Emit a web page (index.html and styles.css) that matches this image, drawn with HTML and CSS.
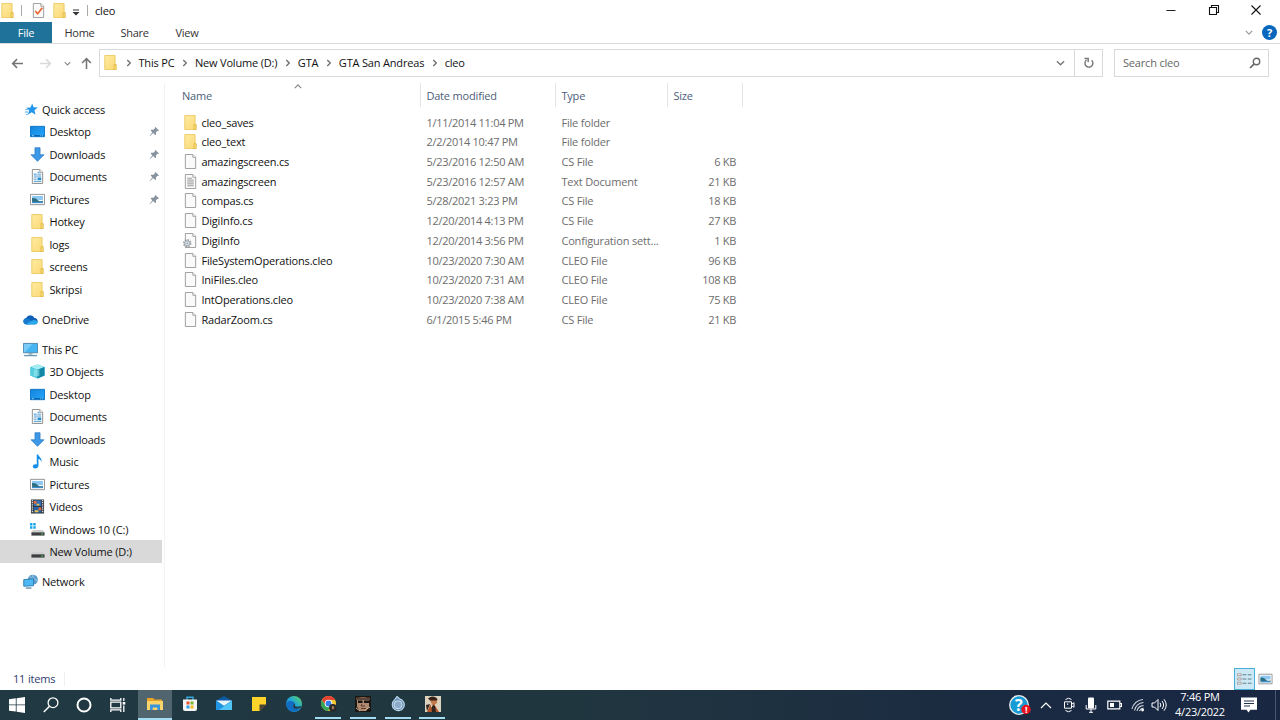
FILE: index.html
```html
<!DOCTYPE html>
<html lang="en">
<head>
    <meta charset="UTF-8">
    <meta name="viewport" content="width=device-width, initial-scale=1.0">
    <title>cleo</title>
    <link rel="stylesheet" href="styles.css">
</head>
<body>
    <svg class="sprite" width="0" height="0">
        <linearGradient id="gFolder" x1="0" y1="0" x2="1" y2="1"><stop offset="0" stop-color="#ffeba3"/><stop offset="1" stop-color="#fbd974"/></linearGradient>
        <linearGradient id="gBlue" x1="0" y1="0" x2="1" y2="1"><stop offset="0" stop-color="#1583dc"/><stop offset="1" stop-color="#25a7fb"/></linearGradient>
        <linearGradient id="gEdge" x1="0" y1="1" x2="1" y2="0"><stop offset="0" stop-color="#0b63b8"/><stop offset=".5" stop-color="#1fa5dd"/><stop offset="1" stop-color="#61d85b"/></linearGradient>
        <symbol id="folder" viewBox="0 0 16 16"><path d="M1.900.600h11v9.600h.9v5.400H1.900z" fill="url(#gFolder)" stroke="#ebc658" stroke-width=".9"/><path d="M11.700 15.500v-5.200h2.300v5.200z" fill="#fbdc7c" stroke="#dfb640" stroke-width=".8"/></symbol>
        <symbol id="file" viewBox="0 0 16 16"><path d="M2.500.5h8l3 3v12h-11z" fill="#fafafa" stroke="#9a9a9a"/><path d="M10.500.5v3h3" fill="#fff" stroke="#9a9a9a"/></symbol>
        <symbol id="text" viewBox="0 0 16 16"><use href="#file"/><path d="M4.500 4.500h5M4.500 6.500h7M4.500 8.500h7M4.500 10.500h7M4.500 12.500h7" stroke="#939393"/></symbol>
        <symbol id="config" viewBox="0 0 16 16"><use href="#file"/><circle cx="4.500" cy="11" r="3.600" fill="#e6eaec" stroke="#949da2" stroke-width="1.800" stroke-dasharray="1.600 1.200"/><circle cx="4.500" cy="11" r="2.700" fill="#e0e5e8" stroke="#9aa5ab"/><circle cx="4.500" cy="11" r=".9" fill="#8e999f"/></symbol>
        <symbol id="check" viewBox="0 0 16 16"><use href="#file"/><path d="M4.500 8.500l2.600 3 5-6.500" fill="none" stroke="#e9672f" stroke-width="1.800"/></symbol>
        <symbol id="star" viewBox="0 0 16 16"><path d="M9.800 1.500l1.500 4.200 4.500.2-3.600 2.800 1.100 5-4-2.700-4.200 2.700 1.600-4.800-3.200-2.800 4.500-.2z" fill="#2196ec"/><path d="M2.500 8.200h3M2 10.700h3.500M3 13.200h2" stroke="#4ba9ec"/></symbol>
        <symbol id="desktop" viewBox="0 0 16 16"><path d="M.5 2.500h15v11H.5z" fill="url(#gBlue)" stroke="#0873c8"/><path d="M1 12.500h14" stroke="#065da6" stroke-width="1.200"/><path d="M2 12.500h2M11 12.500h1M13 12.500h1" stroke="#a5dcff"/></symbol>
        <symbol id="download" viewBox="0 0 16 16"><path d="M5.300.8h5.400v7.500h4.200L8 15.300 1.100 8.300h4.200z" fill="#3d98e8" stroke="#2b79c5" stroke-width=".8"/></symbol>
        <symbol id="document" viewBox="0 0 16 16"><path d="M2.500.5h8l3 3v12h-11z" fill="#fff" stroke="#8b8b8b"/><path d="M10.500.5v3h3" fill="#fff" stroke="#999"/><path d="M4 5.500h3M8 3.500h2" stroke="#1c85d4"/><path d="M4 7.500h8M8 5.500h4M4 9.500h3M4 11.500h3M4 13.500h8" stroke="#4e98cc"/><path d="M8 9h4v3H8z" fill="#258fcf"/></symbol>
        <symbol id="picture" viewBox="0 0 16 16"><path d="M.5 2.500h15v11H.5z" fill="#fff" stroke="#8e8e8e"/><path d="M2.200 4.200h11.600v4.400H2.200z" fill="#8cc8f2"/><path d="M2.200 6.500q4-.5 6 2t5.600.8v1.600H2.200z" fill="#2c6f80"/><path d="M2.200 10.400h11.600v1.500H2.200z" fill="#3c8ccc"/></symbol>
        <symbol id="cloud" viewBox="0 0 16 16"><path d="M3.500 13A3.400 3.400 0 0 1 3.300 6.300 5 5 0 0 1 12.300 6.300 3.400 3.400 0 0 1 13 13z" fill="#0d5fb8"/><path d="M3.400 13.200A3.300 3.300 0 0 1 1.300 7.600q3-1.500 6 .4l6 4.400z" fill="#187bd0"/><path d="M3.400 13.200q4-3.500 7.800-4.700 5.200.2 4.300 3.200-.7 1.500-2.500 1.500z" fill="#29a8ea"/></symbol>
        <symbol id="pc" viewBox="0 0 16 16"><path d="M.5 1.500h15v10H.5z" fill="#46b5f1" stroke="#4d86a8"/><path d="M1 2h9l-8 9H1z" fill="#79ccf7"/><path d="M6 12h4v1.500H6z" fill="#8aa4b4"/><path d="M1 14.500h14" stroke="#6e97b1" stroke-width="1.400"/></symbol>
        <symbol id="cube" viewBox="0 0 16 16"><path d="M8 .5l7.500 2.800v9L8 15.500.5 12.300v-9z" fill="#20b3cf"/><path d="M8 .5l7.500 2.800L8 6 .5 3.300z" fill="#a5edf3"/><path d="M.5 3.300L8 6v9.500L.5 12.300z" fill="#55cfdf"/><path d="M8 6l7.500-2.700v9L8 15.500z" fill="#1388a6"/><path d="M4 6h6v7H4z" fill="#a2edf3" opacity=".55"/></symbol>
        <symbol id="music" viewBox="0 0 16 16"><path d="M7.200.6h1.700c.5 3 3.900 3.400 3.500 8-.8-2.200-1.800-3-3.400-3.300v7.300c0 3.300-6 4-6 .8 0-2.300 2.500-3 4.200-2.200z" fill="#168eea"/></symbol>
        <symbol id="video" viewBox="0 0 16 16"><path d="M1 .5h14v15H1z" fill="#34373b"/><path d="M2.500 1v14M13.500 1v14" stroke="#e5e5e5" stroke-width="1.300" stroke-dasharray="1.300 1"/><path d="M4 1.500h8v6H4z" fill="#3471bf"/><path d="M4 8.500h8v6H4z" fill="#2862ab"/><path d="M4 2h3v3H4zM9 9h3v3H9z" fill="#de6b38"/><path d="M7 5h3v2H7zM5 12h4v2H5z" fill="#e6c14a"/></symbol>
        <symbol id="drive" viewBox="0 0 16 16"><path d="M3 8.500h10.500l2 2.500H1.500z" fill="#cfcfcf"/><path d="M1.500 11h14v3.500h-14z" fill="#3d3f41"/><path d="M12 12.800h2" stroke="#54e260"/></symbol>
        <symbol id="windrive" viewBox="0 0 16 16"><use href="#drive"/><path d="M0 1h2.600v2.600H0zM3.500 1h2.600v2.600H3.500zM0 4.500h2.600v2.600H0zM3.500 4.500h2.600v2.600H3.500z" fill="#16a6ea"/></symbol>
        <symbol id="network" viewBox="0 0 16 16"><circle cx="10.500" cy="6" r="5.300" fill="#5c9cc9"/><path d="M7 3q4 1 3 5M11 1q-2 3 4 6" fill="none" stroke="#aad4ed"/><path d="M.8 6l10.400-1v7.500L.8 13z" fill="#4cb9f4" stroke="#2f7cb2"/><path d="M3 15h6" stroke="#688fa9" stroke-width="1.500"/></symbol>
        <symbol id="pin" viewBox="0 0 12 12"><path d="M7 1l4 4-1.200.5-.6-.2-1.700 1.800.2 2.200-1 .6-2.200-2.200L1 11.300l-.3-.5 2.900-3.900L1.800 5l.6-1 2.300.2 1.800-1.700-.2-.8z" fill="#87939e"/></symbol>
        <symbol id="chev" viewBox="0 0 6 8"><path d="M1.300 1l3 3-3 3" fill="none" stroke="#6d6d6d" stroke-width="1.300"/></symbol>
        <symbol id="down" viewBox="0 0 10 6"><path d="M1 1l4 4 4-4" fill="none" stroke="currentColor" stroke-width="1.500"/></symbol>
        <symbol id="arrow" viewBox="0 0 14 12"><path d="M13 6H2M6.500 1.200L1.700 6l4.800 4.800" fill="none" stroke="currentColor" stroke-width="1.700"/></symbol>
    </svg>

    <div class="window">
        <div class="titlebar">
            <svg class="icon"><use href="#folder"/></svg>
            <i class="rule first"></i>
            <svg class="icon task"><use href="#check"/></svg>
            <svg class="icon second"><use href="#folder"/></svg>
            <svg class="customize" viewBox="0 0 8 7"><path d="M1 1h6" stroke="#333"/><path d="M.5 3h7L4 6.500z" fill="#333"/></svg>
            <i class="rule"></i>
            <span class="title">cleo</span>
            <div class="controls">
                <svg viewBox="0 0 12 12"><path d="M1.500 6.500h9" stroke="#222"/></svg>
                <svg viewBox="0 0 12 12"><path d="M1.500 3.500h7v7h-7zM3.500 3.500v-2h7v7h-2" fill="none" stroke="#111" stroke-width="1.100"/></svg>
                <svg viewBox="0 0 12 12"><path d="M1.500 1.500l9 9M10.500 1.500l-9 9" stroke="#111" stroke-width="1.100"/></svg>
            </div>
        </div>

        <div class="tabs">
            <span class="tab file">File</span>
            <span class="tab home">Home</span>
            <span class="tab share">Share</span>
            <span class="tab view">View</span>
            <div class="tabs-right">
                <svg class="expand"><use href="#down"/></svg>
                <span class="help">?</span>
            </div>
        </div>

        <div class="navbar">
            <svg class="arrow"><use href="#arrow"/></svg>
            <svg class="arrow forward"><use href="#arrow"/></svg>
            <svg class="recent"><use href="#down"/></svg>
            <svg class="arrow up"><use href="#arrow"/></svg>
            <div class="address">
                <svg class="icon"><use href="#folder"/></svg>
                <svg class="chev"><use href="#chev"/></svg><span>This PC</span>
                <svg class="chev"><use href="#chev"/></svg><span>New Volume (D:)</span>
                <svg class="chev"><use href="#chev"/></svg><span>GTA</span>
                <svg class="chev"><use href="#chev"/></svg><span>GTA San Andreas</span>
                <svg class="chev"><use href="#chev"/></svg><span>cleo</span>
                <svg class="history"><use href="#down"/></svg>
                <div class="refresh"><svg viewBox="0 0 12 12"><path d="M8.600 3.200A4 4 0 1 1 3.500 3M1.500 1.500h3.700v3.700" fill="none" stroke="#777" stroke-width="1.400"/></svg></div>
            </div>
            <div class="search">
                <span>Search cleo</span>
                <svg viewBox="0 0 12 12"><circle cx="7.500" cy="4.500" r="3.200" fill="none" stroke="#666" stroke-width="1.400"/><path d="M5.200 6.800L1 11" stroke="#666" stroke-width="1.700"/></svg>
            </div>
        </div>

        <div class="main">
            <div class="sidebar">
                <div class="nav root"><svg class="icon"><use href="#star"/></svg>Quick access</div>
                <div class="nav"><svg class="icon"><use href="#desktop"/></svg>Desktop<svg class="pin"><use href="#pin"/></svg></div>
                <div class="nav"><svg class="icon"><use href="#download"/></svg>Downloads<svg class="pin"><use href="#pin"/></svg></div>
                <div class="nav"><svg class="icon"><use href="#document"/></svg>Documents<svg class="pin"><use href="#pin"/></svg></div>
                <div class="nav"><svg class="icon"><use href="#picture"/></svg>Pictures<svg class="pin"><use href="#pin"/></svg></div>
                <div class="nav"><svg class="icon"><use href="#folder"/></svg>Hotkey</div>
                <div class="nav"><svg class="icon"><use href="#folder"/></svg>logs</div>
                <div class="nav"><svg class="icon"><use href="#folder"/></svg>screens</div>
                <div class="nav"><svg class="icon"><use href="#folder"/></svg>Skripsi</div>
                <div class="nav root"><svg class="icon"><use href="#cloud"/></svg>OneDrive</div>
                <div class="nav root"><svg class="icon"><use href="#pc"/></svg>This PC</div>
                <div class="nav"><svg class="icon"><use href="#cube"/></svg>3D Objects</div>
                <div class="nav"><svg class="icon"><use href="#desktop"/></svg>Desktop</div>
                <div class="nav"><svg class="icon"><use href="#document"/></svg>Documents</div>
                <div class="nav"><svg class="icon"><use href="#download"/></svg>Downloads</div>
                <div class="nav"><svg class="icon"><use href="#music"/></svg>Music</div>
                <div class="nav"><svg class="icon"><use href="#picture"/></svg>Pictures</div>
                <div class="nav"><svg class="icon"><use href="#video"/></svg>Videos</div>
                <div class="nav"><svg class="icon"><use href="#windrive"/></svg>Windows 10 (C:)</div>
                <div class="nav selected"><svg class="icon"><use href="#drive"/></svg>New Volume (D:)</div>
                <div class="nav root"><svg class="icon"><use href="#network"/></svg>Network</div>
            </div>

            <div class="files">
                <div class="row head">
                    <span>Name<svg class="sort"><use href="#down"/></svg></span><span>Date modified</span><span>Type</span><span>Size</span>
                </div>
                <div class="row"><span class="name"><svg class="icon"><use href="#folder"/></svg>cleo_saves</span><span class="date">1/11/2014 11:04 PM</span><span>File folder</span><span class="size"></span></div>
                <div class="row"><span class="name"><svg class="icon"><use href="#folder"/></svg>cleo_text</span><span class="date">2/2/2014 10:47 PM</span><span>File folder</span><span class="size"></span></div>
                <div class="row"><span class="name"><svg class="icon"><use href="#file"/></svg>amazingscreen.cs</span><span class="date">5/23/2016 12:50 AM</span><span>CS File</span><span class="size">6 KB</span></div>
                <div class="row"><span class="name"><svg class="icon"><use href="#text"/></svg>amazingscreen</span><span class="date">5/23/2016 12:57 AM</span><span>Text Document</span><span class="size">21 KB</span></div>
                <div class="row"><span class="name"><svg class="icon"><use href="#file"/></svg>compas.cs</span><span class="date">5/28/2021 3:23 PM</span><span>CS File</span><span class="size">18 KB</span></div>
                <div class="row"><span class="name"><svg class="icon"><use href="#file"/></svg>DigiInfo.cs</span><span class="date">12/20/2014 4:13 PM</span><span>CS File</span><span class="size">27 KB</span></div>
                <div class="row"><span class="name"><svg class="icon"><use href="#config"/></svg>DigiInfo</span><span class="date">12/20/2014 3:56 PM</span><span>Configuration sett...</span><span class="size">1 KB</span></div>
                <div class="row"><span class="name"><svg class="icon"><use href="#file"/></svg>FileSystemOperations.cleo</span><span class="date">10/23/2020 7:30 AM</span><span>CLEO File</span><span class="size">96 KB</span></div>
                <div class="row"><span class="name"><svg class="icon"><use href="#file"/></svg>IniFiles.cleo</span><span class="date">10/23/2020 7:31 AM</span><span>CLEO File</span><span class="size">108 KB</span></div>
                <div class="row"><span class="name"><svg class="icon"><use href="#file"/></svg>IntOperations.cleo</span><span class="date">10/23/2020 7:38 AM</span><span>CLEO File</span><span class="size">75 KB</span></div>
                <div class="row"><span class="name"><svg class="icon"><use href="#file"/></svg>RadarZoom.cs</span><span class="date">6/1/2015 5:46 PM</span><span>CS File</span><span class="size">21 KB</span></div>
            </div>
        </div>

        <div class="status">
            <span class="count">11 items</span>
            <div class="views">
                <span class="view-btn active"><svg viewBox="0 0 16 14"><path d="M.5 1.500h4v2h-4zM.5 6h4v2h-4zM.5 10.500h4v2h-4z" fill="#fff" stroke="#a59a98"/><path d="M6 2.500h4M11.500 2.500h4M6 7h4M11.500 7h4M6 11.500h4M11.500 11.500h4" stroke="#587783"/></svg></span>
                <span class="view-btn"><svg><use href="#picture"/></svg></span>
            </div>
        </div>
    </div>

    <div class="taskbar">
        <div class="system">
            <span><svg viewBox="0 0 16 16"><path d="M0 2.300l6.800-1v6.200H0zM7.600 1.200L16 0v7.500H7.600zM0 8.300h6.800v6.300L0 13.700zM7.600 8.300H16V16l-8.400-1.200z" fill="#fff"/></svg></span>
            <span><svg viewBox="0 0 16 16"><circle cx="10" cy="5.700" r="4.900" fill="none" stroke="#fff" stroke-width="1.300"/><path d="M6.500 9.200L.8 15" stroke="#fff" stroke-width="1.500"/></svg></span>
            <span><svg viewBox="0 0 16 16"><circle cx="8" cy="8" r="6.500" fill="none" stroke="#fff" stroke-width="2"/></svg></span>
            <span><svg viewBox="0 0 16 16"><path d="M.8 1v2.200h10V1M.8 15v-2.200h10V15M.8 5.200h10v5.600H.8zM13.800 1v3M13.800 8.500V15" fill="none" stroke="#fff" stroke-width="1.300"/><path d="M12.700 5h2.600v2.600h-2.600z" fill="#fff"/></svg></span>
        </div>
        <div class="apps">
            <span class="app current"><svg viewBox="0 0 16 16"><path d="M0 2h6l1.500 1.500H15v3H0z" fill="#e9a326"/><path d="M0 5h16v9H0z" fill="#fbd46b"/><path d="M3 14V8.500h10V14h-2.700v-2.600H5.700V14z" fill="#3693dc"/></svg></span>
            <span class="app"><svg viewBox="0 0 16 16"><path d="M5 4V1.200h6V4" fill="none" stroke="#35a8df" stroke-width="1.400"/><path d="M1 3.500h14V13a2 2 0 0 1-2 2H3a2 2 0 0 1-2-2z" fill="#f5f5f5"/><path d="M4.500 5.500h3v3h-3z" fill="#e9512c"/><path d="M8.500 5.500h3v3h-3z" fill="#78b829"/><path d="M4.500 9.500h3v3h-3z" fill="#289fe1"/><path d="M8.500 9.500h3v3h-3z" fill="#f7b91c"/></svg></span>
            <span class="app"><svg viewBox="0 0 16 16"><path d="M0 4.500L8 0l8 4.500V14H0z" fill="#0c59a4"/><path d="M0 4.500h16L8 10z" fill="#e7f6fd"/><path d="M0 4.500L8 10l8-5.500V14H0z" fill="#2096e2"/><path d="M16 4.500V14H3z" fill="#50c5f5"/></svg></span>
            <span class="app"><svg viewBox="0 0 16 16"><path d="M1 1h14v14H1z" fill="#fed42b"/><path d="M8.500 8.500H15L8.500 15z" fill="#4a4533"/><path d="M15 8.500V15H8.500z" fill="#22343c"/></svg></span>
            <span class="app"><svg viewBox="0 0 16 16"><circle cx="8" cy="8" r="8" fill="url(#gEdge)"/><path d="M.3 7C3 4 8 4.500 8.800 7.600 6 8 6.500 12 10 12.800q3 .7 5-1.300A8 8 0 0 1 .3 7z" fill="#126cc2"/><path d="M8.800 7.300c1 .8-.5 2 .3 2.900q2.400 1 5.500-.2l.8 1q-3.500 2.700-6.800 1.400-3.200-2.300.2-5.100z" fill="#213840"/></svg></span>
            <span class="app open"><svg viewBox="0 0 16 16"><circle cx="7.500" cy="7.500" r="7.500" fill="#f6c933"/><path d="M.8 4.100A7.500 7.500 0 0 1 14.200 4.100H7.500L4.500 9.500z" fill="#e84435"/><path d="M.8 4.100A7.500 7.500 0 0 0 7 15L10 9.500 4.500 9z" fill="#36a558"/><circle cx="7.500" cy="7.500" r="3.800" fill="#fff"/><circle cx="7.500" cy="7.500" r="2.900" fill="#337eea"/><circle cx="11.800" cy="11.800" r="3.700" fill="#292425"/><path d="M11 10h2l.5 2-1.500 2-1.500-2z" fill="#92715e"/></svg></span>
            <span class="app open"><svg viewBox="0 0 16 16"><path d="M0 0h16v16H0z" fill="#1d1713"/><path d="M2 3q6-4 12 0v8l-3 4H5l-3-4z" fill="#b08a70"/><path d="M1 1.500h14v2.500H1z" fill="#594638"/><path d="M3 4.500h4.500V7H3zM9 4.500h5V7H9z" fill="#151313"/><path d="M7 8l-1 2h4M6 12.500h5" fill="none" stroke="#5c3a2c"/><path d="M1 12l4 3M10 14l5-3" stroke="#cab59b"/></svg></span>
            <span class="app open"><svg viewBox="0 0 16 16"><path d="M7 .5l2.500 2.300A6 6 0 1 1 4.500 4z" fill="#6d92b8" stroke="#b6d4e8" stroke-width="1.200"/><circle cx="8" cy="8.800" r="4" fill="#8babc8" stroke="#d2e6f1" stroke-width=".9"/></svg></span>
            <span class="app open"><svg viewBox="0 0 16 16"><path d="M0 0h16v16H0z" fill="#ddd2bd"/><path d="M5 3l4-1 3 1v4L9 9 6 7z" fill="#c57849"/><path d="M3 2.500q5-4 9.500.5l-.5 1.500H5z" fill="#392217"/><path d="M2 16l3-7 4-1 5 8z" fill="#b0572c"/><path d="M6 8l4 2 1 6H7zM1 9l4-1-3 7z" fill="#33251e"/><path d="M6 8l2 1-2 3z" fill="#f0d7b4"/></svg></span>
        </div>
        <div class="tray">
            <span class="t-help"><svg viewBox="0 0 22 20"><circle cx="10" cy="10" r="9.300" fill="#169bd5" stroke="#eee" stroke-width="1.300"/><circle cx="17" cy="14.500" r="4.700" fill="#e8121c"/></svg><b>?</b><em>!</em></span>
            <span class="t-up"><svg viewBox="0 0 12 8"><path d="M1 7l5-5 5 5" fill="none" stroke="#fff" stroke-width="1.200"/></svg></span>
            <span class="t-cam"><svg viewBox="0 0 12 16"><path d="M2.500 2.500q3-2.500 6 0M2.500 13.500q3 2.500 6 0M1.500 4.800h7v6.400h-7zM8.500 7.300l2.500-1.600v4.600L8.500 8.700" fill="none" stroke="#fff"/><path d="M4 6.500h1.200v1.200H4z" fill="#fff"/></svg></span>
            <span class="t-mic"><svg viewBox="0 0 12 16"><rect x="3" y=".5" width="6" height="11" rx="1" fill="#fff"/><path d="M1.200 8v4h9.600V8M6 12v3.500M4 15.300h4" fill="none" stroke="#fff"/></svg></span>
            <span class="t-bat"><svg viewBox="0 0 15 10"><path d="M.8 1.200h12v7.600H.8zM13 3.500h1.500v3H13" fill="none" stroke="#fff" stroke-width="1.200"/><path d="M3 3h4v4H3z" fill="#fff"/></svg></span>
            <span class="t-wifi"><svg viewBox="0 0 14 14"><path d="M1 11A12 12 0 0 1 12 1.500M3.500 12.500A10 10 0 0 1 12.500 4.500M6 13A7 7 0 0 1 12.500 7.500M8.500 13A5 5 0 0 1 12.500 10" fill="none" stroke="#d9dee5" stroke-width="1.100"/><circle cx="11.600" cy="12" r="1.400" fill="#fff"/></svg></span>
            <span class="t-vol"><svg viewBox="0 0 16 14"><path d="M1 5h2.500L7 1.500v11L3.500 9H1zM9 4.800q1.700 2.200 0 4.400M11 3q3.200 4 0 8M13 1.300q4.500 5.700 0 11.400" fill="none" stroke="#fff"/></svg></span>
            <div class="clock"><span>7:46 PM</span><span>4/23/2022</span></div>
            <span class="t-note"><svg viewBox="0 0 16 16"><path d="M0 .5h16v12.200H9.500L7.500 15.500 5.500 12.700H0z" fill="#fff"/><path d="M3 4h10M3 6.500h10M3 9h6" stroke="#24334f"/></svg></span>
            <i class="show-desktop"></i>
        </div>
    </div>
</body>
</html>
```
FILE: styles.css
```css
* {
    box-sizing: border-box;
}
body {
    margin: 0;
    width: 1280px;
    height: 720px;
    overflow: hidden;
    background: #fff;
    color: #111;
    font-family: "Open Sans", "Noto Sans", sans-serif;
    font-size: 11px;
    letter-spacing: -0.18px;
    white-space: nowrap;
}
svg {
    display: block;
    flex: none;
}
.sprite {
    position: absolute;
}
.icon {
    width: 15px;
    height: 15px;
}
.window {
    height: 690px;
    display: flex;
    flex-direction: column;
}

/* title bar */
.titlebar {
    height: 22px;
    padding-bottom: 1px;
    display: flex;
    align-items: center;
}
.rule {
    width: 1px;
    height: 11px;
    background: #aaa;
}
.rule.first {
    margin-left: 6px;
}
.task {
    margin-left: 9px;
}
.second {
    margin-left: 6px;
}
.customize {
    width: 8px;
    height: 7px;
    margin: 3px 7px 0 5px;
}
.title {
    margin-left: 7px;
}
.controls {
    display: flex;
    margin-left: auto;
    padding-right: 2px;
}
.controls svg {
    width: 12px;
    height: 12px;
    margin: -2px 15.6px 0 15px;
}

/* ribbon tabs */
.tabs {
    height: 22px;
    display: flex;
    border-bottom: 1px solid #dadbdc;
    color: #333;
}
.tab {
    line-height: 21px;
    text-align: center;
}
.file {
    width: 52px;
    background: #1f7299;
    color: #fff;
}
.home {
    width: 55px;
}
.share {
    width: 55px;
}
.view {
    width: 50px;
}
.home,
.share,
.view {
    letter-spacing: -0.3px;
}
.tabs-right {
    display: flex;
    align-items: center;
    gap: 9px;
    margin-left: auto;
    padding-right: 3px;
}
.expand {
    width: 8px;
    height: 5px;
    color: #999;
}
.help {
    width: 15px;
    height: 15px;
    border-radius: 50%;
    background: #0867bd;
    color: #fff;
    font-weight: 700;
    line-height: 15px;
    text-align: center;
}

/* address bar */
.navbar {
    height: 39px;
    padding: 5px 11px 6px;
    display: flex;
    align-items: center;
}
.arrow {
    width: 13px;
    height: 11px;
    color: #757575;
}
.forward {
    margin-left: 15px;
    color: #dadada;
    transform: scaleX(-1);
}
.recent {
    width: 7px;
    height: 5px;
    margin-left: 12px;
    color: #888;
}
.up {
    margin-left: 9px;
    transform: rotate(90deg);
}
.address {
    width: 1004px;
    height: 28px;
    margin-left: 6px;
    padding: 0 0 1px 3px;
    display: flex;
    align-items: center;
    border: 1px solid #d9d9d9;
}
.chev {
    width: 6px;
    height: 8px;
    margin: 0 6.6px 0 7.9px;
}
.history {
    width: 9px;
    height: 6px;
    margin: 0 9px 0 auto;
    color: #777;
}
.refresh {
    width: 28px;
    height: 26px;
    margin-bottom: -1px;
    display: flex;
    align-items: center;
    justify-content: center;
    border-left: 1px solid #d9d9d9;
}
.refresh svg,
.search svg {
    width: 12px;
    height: 12px;
}
.search {
    width: 155px;
    height: 28px;
    margin-left: 11px;
    padding: 0 7px 1px 8px;
    display: flex;
    align-items: center;
    justify-content: space-between;
    border: 1px solid #d9d9d9;
    color: #666;
}

/* navigation pane */
.main {
    height: 584px;
    display: flex;
}
.sidebar {
    width: 165px;
    padding-top: 7.4px;
    border-right: 1px solid #f2f2f2;
}
.nav {
    width: 162px;
    height: 22.5px;
    padding: 0 2px 0 30px;
    display: flex;
    align-items: center;
}
.nav .icon {
    margin-right: 4.5px;
}
.root {
    margin-top: 7.5px;
    padding-left: 22.5px;
}
.selected {
    background: #d9d9d9;
}
.pin {
    width: 11px;
    height: 11px;
    margin-left: auto;
}

/* file list */
.files {
    flex: 1;
}
.row {
    height: 19.7px;
    display: grid;
    grid-template-columns: 256px 135px 112px 75px;
    align-items: center;
    color: #6d6d6d;
}
.row > span {
    padding-left: 5.4px;
}
.row > .name {
    padding-left: 17.6px;
    display: flex;
    align-items: center;
    gap: 3.8px;
    color: #111;
}
.row > .date {
    letter-spacing: -0.28px;
}
.row > .size {
    padding-right: 7px;
    text-align: right;
    letter-spacing: -0.3px;
}
.head {
    height: 24px;
    margin-bottom: 5.4px;
    color: #4c607a;
}
.head > span {
    position: relative;
    height: 24px;
    line-height: 25px;
    border-right: 1px solid #e5e5e5;
}
.head > span:first-child {
    padding-left: 17px;
}
.sort {
    position: absolute;
    top: 1px;
    left: 129px;
    width: 8px;
    height: 5px;
    color: #888;
    transform: scaleY(-1);
}

/* status bar */
.status {
    height: 23px;
    padding: 0 4px 0 13px;
    display: flex;
    justify-content: space-between;
    color: #303b6d;
}
.count {
    width: 52px;
    height: 14px;
    margin-top: 5px;
    line-height: 14px;
    border-right: 1px solid #f0f0f0;
}
.views {
    display: flex;
}
.view-btn {
    width: 21px;
    height: 22px;
    margin-top: 1px;
    display: flex;
    align-items: center;
    justify-content: center;
}
.view-btn svg {
    width: 15px;
    height: 14px;
}
.active {
    background: #cce8f5;
    border: 1px solid #48afd8;
}

/* taskbar */
.taskbar {
    height: 30px;
    display: flex;
    background: linear-gradient(90deg, #203942, #20363f 45%, #1a2a42 80%, #192743);
    color: #fff;
}
.system,
.apps,
.tray {
    display: flex;
}
.system span {
    width: 33.7px;
    padding-bottom: 1px;
    display: flex;
    align-items: center;
    justify-content: center;
}
.apps {
    margin-left: 3px;
}
.system svg,
.app svg {
    width: 16px;
    height: 16px;
}
.app {
    position: relative;
    width: 34.7px;
    padding-bottom: 2px;
    display: flex;
    align-items: center;
    justify-content: center;
}
.current {
    width: 34px;
    margin-right: .7px;
    padding-bottom: 0;
    background: #50656d;
    border-bottom: 2px solid #a4dcf3;
    background-clip: padding-box;
}
.open::after {
    content: "";
    position: absolute;
    left: 4px;
    bottom: 1px;
    width: 26px;
    height: 2px;
    background: #a4dcf3;
}
.tray {
    width: 273px;
    margin-left: auto;
}
.tray > span {
    display: flex;
    align-items: center;
    justify-content: center;
}
.t-help {
    position: relative;
    width: 26px;
}
.t-help svg {
    width: 22px;
    height: 20px;
}
.t-help b {
    position: absolute;
    left: 8px;
    top: 5px;
    font-size: 16px;
    line-height: 20px;
}
.t-help em {
    position: absolute;
    left: 18px;
    top: 14px;
    font-size: 9px;
    font-style: normal;
    font-weight: 700;
    line-height: 11px;
}
.t-up {
    width: 26px;
}
.t-up svg {
    width: 12px;
    height: 8px;
}
.t-cam {
    width: 20px;
}
.t-cam svg,
.t-mic svg {
    width: 12px;
    height: 16px;
}
.t-mic {
    width: 24px;
}
.t-bat {
    width: 22px;
}
.t-bat svg {
    width: 15px;
    height: 10px;
}
.t-wifi {
    width: 26px;
}
.t-wifi svg {
    width: 14px;
    height: 14px;
}
.t-vol {
    width: 16px;
}
.t-vol svg {
    width: 16px;
    height: 14px;
}
.clock {
    width: 66px;
    display: flex;
    flex-direction: column;
    text-align: center;
    line-height: 14.6px;
    letter-spacing: -0.25px;
}
.t-note {
    width: 32px;
}
.t-note svg {
    width: 16px;
    height: 16px;
}
.show-desktop {
    width: 1px;
    margin-left: 10px;
    background: #4a5870;
}
```
